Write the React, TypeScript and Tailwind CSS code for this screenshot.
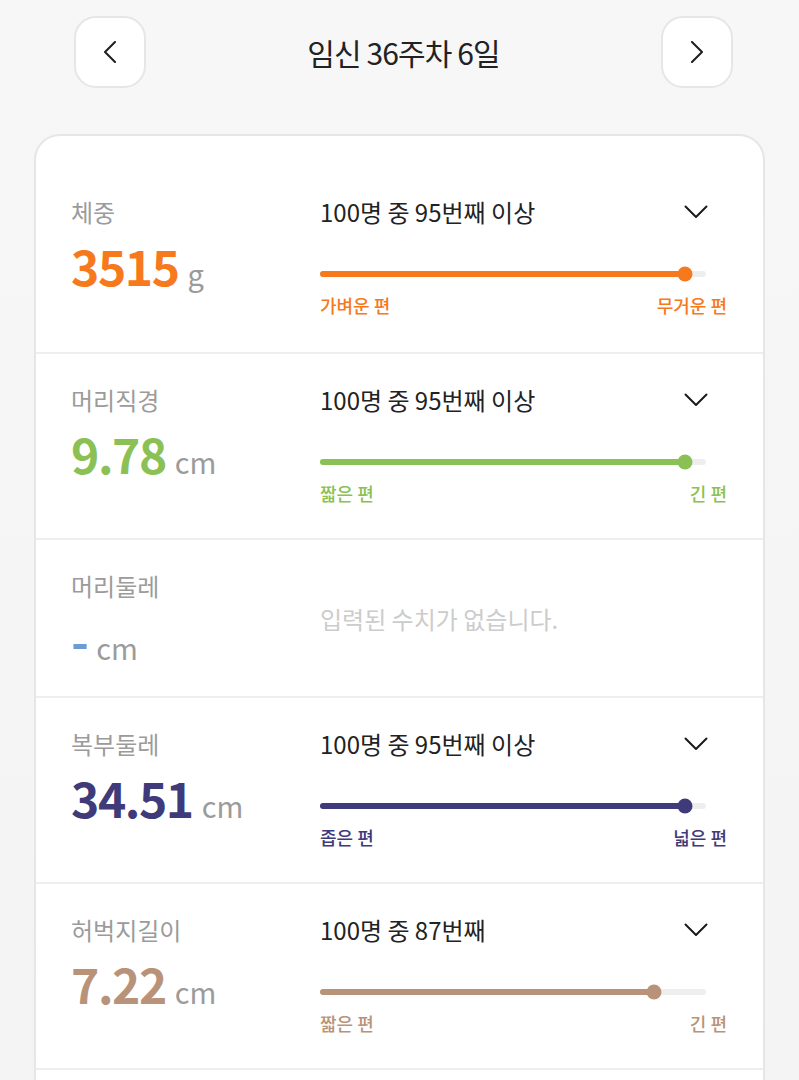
import React from "react";

type Metric = {
  label: string;
  value?: string;
  unit: string;
  rank?: string;
  percent?: number;
  low?: string;
  high?: string;
  textColor: string;
  barColor: string;
};

const metrics: Metric[] = [
  {
    label: "체중",
    value: "3515",
    unit: "g",
    rank: "100명 중 95번째 이상",
    percent: 94.5,
    low: "가벼운 편",
    high: "무거운 편",
    textColor: "text-[#f7791d]",
    barColor: "bg-[#f7791d]",
  },
  {
    label: "머리직경",
    value: "9.78",
    unit: "cm",
    rank: "100명 중 95번째 이상",
    percent: 94.5,
    low: "짧은 편",
    high: "긴 편",
    textColor: "text-[#8bc154]",
    barColor: "bg-[#8bc154]",
  },
  {
    label: "머리둘레",
    unit: "cm",
    textColor: "text-[#6e9bd3]",
    barColor: "bg-[#6e9bd3]",
  },
  {
    label: "복부둘레",
    value: "34.51",
    unit: "cm",
    rank: "100명 중 95번째 이상",
    percent: 94.5,
    low: "좁은 편",
    high: "넓은 편",
    textColor: "text-[#3f3a79]",
    barColor: "bg-[#3f3a79]",
  },
  {
    label: "허벅지길이",
    value: "7.22",
    unit: "cm",
    rank: "100명 중 87번째",
    percent: 86.5,
    low: "짧은 편",
    high: "긴 편",
    textColor: "text-[#b8937a]",
    barColor: "bg-[#b8937a]",
  },
];

const font = { fontFamily: '"Noto Sans CJK KR", "Noto Sans", sans-serif' };

const Chevron = ({ dir }: { dir: "left" | "right" }) => (
  <svg width="14" height="22" viewBox="0 0 14 22" fill="none">
    <polyline
      points={dir === "left" ? "12,1 2,11 12,21" : "2,1 12,11 2,21"}
      stroke="#1f1f1f"
      strokeWidth="2"
      strokeLinecap="round"
      strokeLinejoin="round"
    />
  </svg>
);

const ChevronDown = () => (
  <svg width="24" height="14" viewBox="0 0 24 14" fill="none">
    <polyline
      points="1.5,1.5 12,12 22.5,1.5"
      stroke="#1a1a1a"
      strokeWidth="2"
      strokeLinecap="round"
      strokeLinejoin="round"
    />
  </svg>
);

const MetricRow = ({ m, first }: { m: Metric; first: boolean }) => {
  const empty = !m.value;
  return (
    <div
      className={`flex pl-[35px] pr-[36px] ${first ? "" : "border-t-2 border-[#eeeeee]"} ${
        empty ? "h-[158px]" : "h-[186px]"
      } pt-[29px]`}
    >
      <div className="w-[249px] shrink-0">
        <div className="h-[34px] leading-[34px] text-[24px] text-[#9b9b9b]">{m.label}</div>
        <div className="flex items-baseline mt-[8px] h-[56px]">
          <span className={`text-[48px] leading-[56px] font-bold tracking-[-0.03em] ${m.textColor}`}>
            {empty ? "-" : m.value}
          </span>
          <span className="ml-[9px] text-[29px] text-[#9b9b9b]">{m.unit}</span>
        </div>
      </div>

      {empty ? (
        <div className="flex-1 flex items-start pt-[33px]">
          <span className="text-[24px] leading-[34px] text-[#cccccc]">입력된 수치가 없습니다.</span>
        </div>
      ) : (
        <div className="flex-1">
          <div className="h-[34px] flex items-center justify-between mr-[19px]">
            <span className="text-[24px] leading-[34px] text-[#222222]">{m.rank}</span>
            <ChevronDown />
          </div>
          <div className="relative mt-[42px] mr-[21px] h-[6px] rounded-full bg-[#eeeeee]">
            <div
              className={`absolute left-0 top-0 h-[6px] rounded-full ${m.barColor}`}
              style={{ width: `${m.percent}%` }}
            />
            <div
              className={`absolute top-1/2 w-[15px] h-[15px] -translate-x-1/2 -translate-y-1/2 rounded-full ${m.barColor}`}
              style={{ left: `${m.percent}%` }}
            />
          </div>
          <div className={`mt-[16px] flex justify-between text-[18px] leading-[24px] font-medium ${m.textColor}`}>
            <span>{m.low}</span>
            <span>{m.high}</span>
          </div>
        </div>
      )}
    </div>
  );
};

export default function App() {
  return (
    <div
      className="min-h-[1080px] w-full bg-gradient-to-b from-[#f7f7f7] to-[#f3f3f3] overflow-hidden"
      style={font}
    >
      <div className="flex items-center justify-between pt-4 pl-[74px] pr-[66px]">
        <button className="w-[72px] h-[72px] rounded-[22px] bg-white border-2 border-[#e6e6e6] flex items-center justify-center">
          <Chevron dir="left" />
        </button>
        <h1 className="text-[30px] text-[#222222] tracking-[-0.03em]">임신 36주차 6일</h1>
        <button className="w-[72px] h-[72px] rounded-[22px] bg-white border-2 border-[#e6e6e6] flex items-center justify-center">
          <Chevron dir="right" />
        </button>
      </div>

      <div className="mx-[34px] mt-[46px] rounded-t-[26px] bg-white border-2 border-[#e6e6e6] pt-[30px] pb-10">
        {metrics.map((m, i) => (
          <MetricRow key={m.label} m={m} first={i === 0} />
        ))}
        <div className="border-t-2 border-[#eeeeee] h-[186px]" />
      </div>
    </div>
  );
}
